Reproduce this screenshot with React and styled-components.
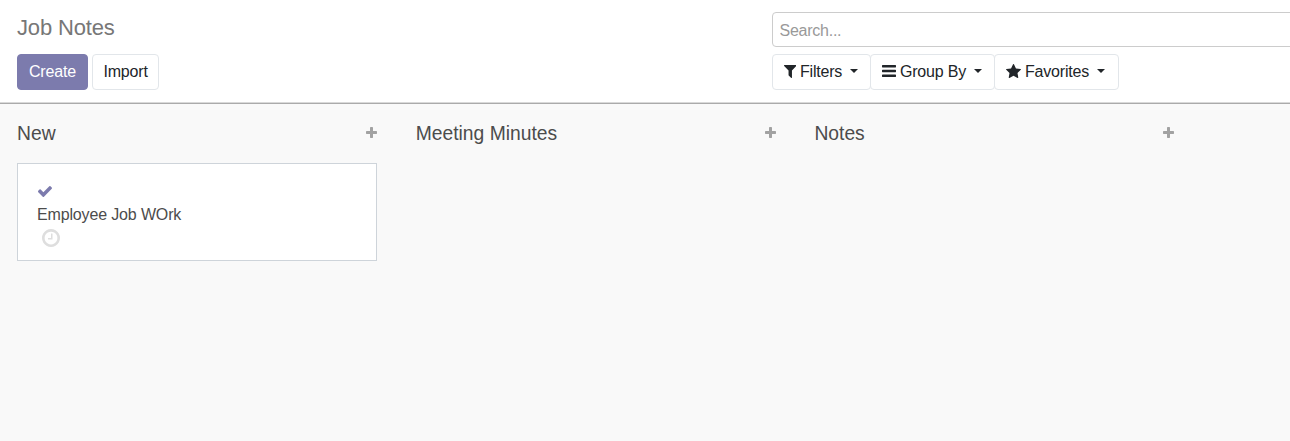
import React from 'react';
import styled, { createGlobalStyle } from 'styled-components';

const GlobalStyle = createGlobalStyle`
  * { box-sizing: border-box; }
  body {
    margin: 0;
    background: #f9f9f9;
    color: #4c4c4c;
    font-family: "Liberation Sans", Arial, sans-serif;
    font-size: 16px;
    line-height: 24px;
  }
  button, input { font: inherit; }
`;

const Page = styled.div`
  height: 441px;
  overflow: hidden;
`;

const ControlPanel = styled.header`
  display: grid;
  grid-template-columns: 754.5px 1fr;
  grid-template-rows: 35px 36px;
  row-gap: 7px;
  height: 104px;
  padding: 12px 0 0 17px;
  background: #fff;
  border-bottom: 1px solid #aaa;
  box-shadow: inset 0 -1px 0 #d9d9d9;
`;

const Title = styled.h1`
  margin: 0;
  font-size: 22px;
  font-weight: 400;
  line-height: 32px;
  letter-spacing: -0.15px;
  color: #777;
`;

const SearchInput = styled.input`
  width: 540px;
  height: 35px;
  padding: 3px 7px 0;
  border: 1px solid #ccc;
  border-radius: 4px;
  background: #fff;
  outline: none;
  letter-spacing: -0.25px;
  &::placeholder { color: #999; opacity: 1; }
`;

const ButtonRow = styled.div`
  display: flex;
  gap: ${(p) => p.$gap || 0};
`;

const Button = styled.button`
  display: flex;
  align-items: center;
  width: ${(p) => p.$width};
  height: 36px;
  margin: 0;
  padding: 0 0 1px 11px;
  border: 1px solid ${(p) => (p.$primary ? '#7c7bad' : '#e2e6ea')};
  border-radius: 4px;
  background: ${(p) => (p.$primary ? '#7c7bad' : '#fff')};
  color: ${(p) => (p.$primary ? '#fff' : '#212529')};
  letter-spacing: -0.2px;
  white-space: nowrap;

  & + & { margin-left: ${(p) => (p.$joined ? '-1px' : '0')}; }
`;

const Label = styled.span`
  margin-left: 4px;
`;

const Caret = styled.span`
  margin: 0 0 1px 8px;
  border-top: 4px solid currentColor;
  border-left: 4px solid transparent;
  border-right: 4px solid transparent;
`;

const Board = styled.main`
  display: flex;
  gap: 38.7px;
  padding: 17px 0 0 17px;
`;

const Column = styled.section`
  flex: 0 0 360px;
`;

const ColumnHeader = styled.div`
  display: flex;
  align-items: center;
  justify-content: space-between;
  height: 25px;
  color: #a2a2a2;
`;

const ColumnTitle = styled.h2`
  margin: 0;
  font-size: 19.3px;
  font-weight: 400;
  color: #4c4c4c;
`;

const Card = styled.article`
  display: flex;
  flex-direction: column;
  align-items: flex-start;
  height: 98px;
  margin-top: 17px;
  padding: 22px 19px 0;
  background: #fff;
  border: 1px solid #ced4da;
`;

const CardText = styled.div`
  margin-top: 6px;
  letter-spacing: -0.15px;
`;

const Glyph = styled.svg`
  display: block;
  flex: none;
  width: ${(p) => p.$w}px;
  height: ${(p) => p.$h}px;
  margin: ${(p) => p.$margin || 0};
  color: ${(p) => p.$color || 'inherit'};
  fill: currentColor;
`;

const icons = {
  filter: {
    box: '192 256 1408 1408',
    d: 'M1595 295q17 41-14 70l-493 493v742q0 42-39 59-13 5-25 5-27 0-45-19l-256-256q-19-19-19-45v-486l-493-493q-31-29-14-70 17-39 59-39h1280q42 0 59 39z',
  },
  bars: {
    box: '128 256 1536 1280',
    d: 'M1664 1344v128q0 26-19 45t-45 19h-1408q-26 0-45-19t-19-45v-128q0-26 19-45t45-19h1408q26 0 45 19t19 45zm0-512v128q0 26-19 45t-45 19h-1408q-26 0-45-19t-19-45v-128q0-26 19-45t45-19h1408q26 0 45 19t19 45zm0-512v128q0 26-19 45t-45 19h-1408q-26 0-45-19t-19-45v-128q0-26 19-45t45-19h1408q26 0 45 19t19 45z',
  },
  star: {
    box: '64 32 1664 1587',
    d: 'M1728 647q0 22-26 48l-363 354 86 500q1 7 1 20 0 21-10.5 35.5t-30.5 14.5q-19 0-40-12l-449-236-449 236q-22 12-40 12-21 0-31.5-14.5t-10.5-35.5q0-6 2-20l86-500-364-354q-25-27-25-48 0-37 56-46l502-73 225-455q19-41 49-41t49 41l225 455 502 73q56 9 56 46z',
  },
  check: {
    box: '121 334 1550 1188',
    d: 'M1671 566q0 40-28 68l-724 724-136 136q-28 28-68 28t-68-28l-136-136-362-362q-28-28-28-68t28-68l136-136q28-28 68-28t68 28l294 295 656-657q28-28 68-28t68 28l136 136q28 28 28 68z',
  },
  plus: {
    box: '192 128 1408 1408',
    d: 'M1600 736v192q0 40-28 68t-68 28h-416v416q0 40-28 68t-68 28h-192q-40 0-68-28t-28-68v-416h-416q-40 0-68-28t-28-68v-192q0-40 28-68t68-28h416v-416q0-40 28-68t68-28h192q40 0 68 28t28 68v416h416q40 0 68 28t28 68z',
  },
  clock: {
    box: '128 128 1536 1536',
    d: 'M1024 544v448q0 14-9 23t-23 9h-320q-14 0-23-9t-9-23v-64q0-14 9-23t23-9h224v-352q0-14 9-23t23-9h64q14 0 23 9t9 23zm416 352q0-148-73-273t-198-198-273-73-273 73-198 198-73 273 73 273 198 198 273 73 273-73 198-198 73-273zm224 0q0 209-103 385.5t-279.5 279.5-385.5 103-385.5-103-279.5-279.5-103-385.5 103-385.5 279.5-279.5 385.5-103 385.5 103 279.5 279.5 103 385.5z',
  },
};

function Icon({ name, w, h, margin, color }) {
  const { box, d } = icons[name];
  return (
    <Glyph viewBox={box} preserveAspectRatio="none" $w={w} $h={h} $margin={margin} $color={color} aria-hidden="true">
      <path d={d} />
    </Glyph>
  );
}

const menus = [
  { label: 'Filters', icon: 'filter', w: 12.5, h: 13, width: '99.5px' },
  { label: 'Group By', icon: 'bars', w: 14, h: 12, width: '125px', margin: '0 0 1px' },
  { label: 'Favorites', icon: 'star', w: 15, h: 14, width: '125px', margin: '0 0 2px' },
];

const columns = [
  { title: 'New', cards: ['Employee Job WOrk'] },
  { title: 'Meeting Minutes', cards: [] },
  { title: 'Notes', cards: [] },
];

export default function App() {
  return (
    <Page>
      <GlobalStyle />
      <ControlPanel>
        <Title>Job Notes</Title>
        <SearchInput placeholder="Search..." />
        <ButtonRow $gap="4.5px">
          <Button $primary $width="71px">Create</Button>
          <Button $width="67.5px">Import</Button>
        </ButtonRow>
        <ButtonRow>
          {menus.map((m) => (
            <Button key={m.label} $joined $width={m.width}>
              <Icon name={m.icon} w={m.w} h={m.h} margin={m.margin} />
              <Label>{m.label}</Label>
              <Caret />
            </Button>
          ))}
        </ButtonRow>
      </ControlPanel>
      <Board>
        {columns.map((c) => (
          <Column key={c.title}>
            <ColumnHeader>
              <ColumnTitle>{c.title}</ColumnTitle>
              <Icon name="plus" w={11} h={11} margin="0 0 2px" />
            </ColumnHeader>
            {c.cards.map((text) => (
              <Card key={text}>
                <Icon name="check" w={14} h={11} color="#7c7bad" margin="0 0 0 1px" />
                <CardText>{text}</CardText>
                <Icon name="clock" w={18} h={18} color="#dedede" margin="2px 0 0 5px" />
              </Card>
            ))}
          </Column>
        ))}
      </Board>
    </Page>
  );
}
